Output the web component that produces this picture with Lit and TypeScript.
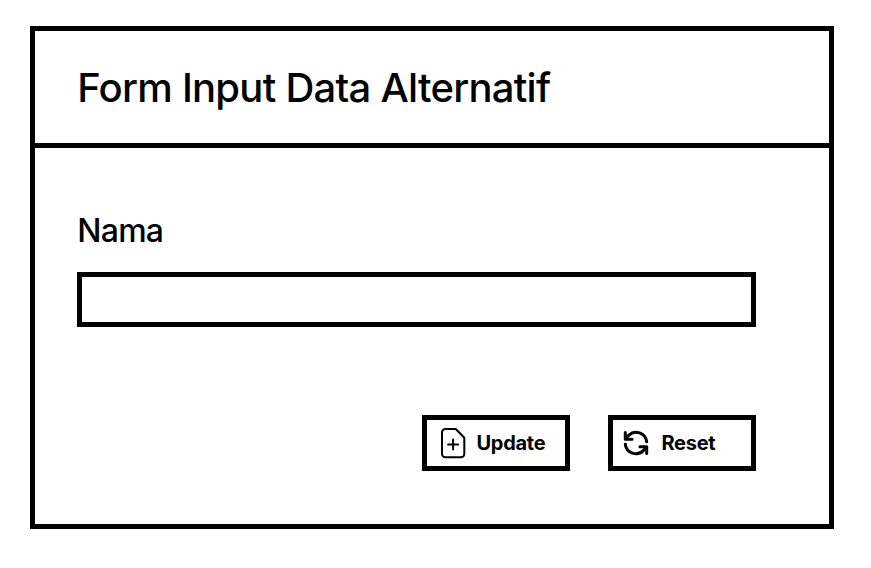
import { LitElement, html, css } from "lit";
import { customElement } from "lit/decorators.js";

@customElement("app-root")
export class AppRoot extends LitElement {
  static styles = css`
    :host { display: block; width: 871px; height: 568px; padding: 26px 0 0 30px; box-sizing: border-box; overflow: hidden; background: #fff; color: #000; font-family: Inter, sans-serif; }
    .card { width: 804px; height: 503px; box-sizing: border-box; border: 5px solid #000; display: flex; flex-direction: column; }
    .head { height: 117px; box-sizing: border-box; border-bottom: 5px solid #000; padding: 2px 0 0 42.2px; display: flex; align-items: center; }
    h1 { margin: 0; font-size: 40px; font-weight: 480; line-height: 48px; white-space: nowrap; letter-spacing: -0.75px; }
    .body { padding: 63px 73px 0 42px; display: flex; flex-direction: column; }
    label { font-size: 32px; font-weight: 450; line-height: 39px; letter-spacing: -0.75px; padding-left: 0.3px; }
    input { display: block; width: 100%; height: 55px; box-sizing: border-box; border: 5px solid #000; border-radius: 0; background: #fff; margin: 22px 0 0; padding: 0 12px; outline: none; font: 400 24px Inter, sans-serif; }
    .actions { display: flex; justify-content: flex-end; gap: 38px; margin-top: 88px; }
    button { width: 148px; height: 56px; box-sizing: border-box; border: 5px solid #000; border-radius: 0; background: #fff; color: #000; padding: 0 0 0 10px; display: flex; align-items: center; gap: 7.5px; font: 700 20px/24px Inter, sans-serif; letter-spacing: -0.28px; }
    svg { width: 32px; height: 32px; flex: none; fill: none; stroke: #000; stroke-linecap: round; stroke-linejoin: round; }
    .reset { gap: 6.5px; }
  `;

  render() {
    return html`
      <form class="card" @submit=${(e: Event) => e.preventDefault()}>
        <header class="head"><h1>Form Input Data Alternatif</h1></header>
        <div class="body">
          <label for="nama">Nama</label>
          <input id="nama" type="text" />
          <div class="actions">
            <button type="button">
              <svg viewBox="0 0 32 32" stroke-width="2"><path d="M8.3 2H18.8L27.3 10.8V27a3.3 3.3 0 0 1-3.3 3.3H8.3A3.3 3.3 0 0 1 5 27V5.3A3.3 3.3 0 0 1 8.3 2zM16.1 12.6v10M11.1 17.6h10" /></svg>
              <span>Update</span>
            </button>
            <button type="button" class="reset">
              <svg viewBox="0 0 32 32" stroke-width="3"><path d="M2.3 5.5v6.8h6.8M23.7 19.7h-6.8M23.7 26.5v-6.8M2.6 12L5.4 8.6A10.7 10.7 0 0 1 23.7 14.8M23.4 20L20.6 23.4A10.7 10.7 0 0 1 2.3 17.2" /></svg>
              <span>Reset</span>
            </button>
          </div>
        </div>
      </form>
    `;
  }
}
